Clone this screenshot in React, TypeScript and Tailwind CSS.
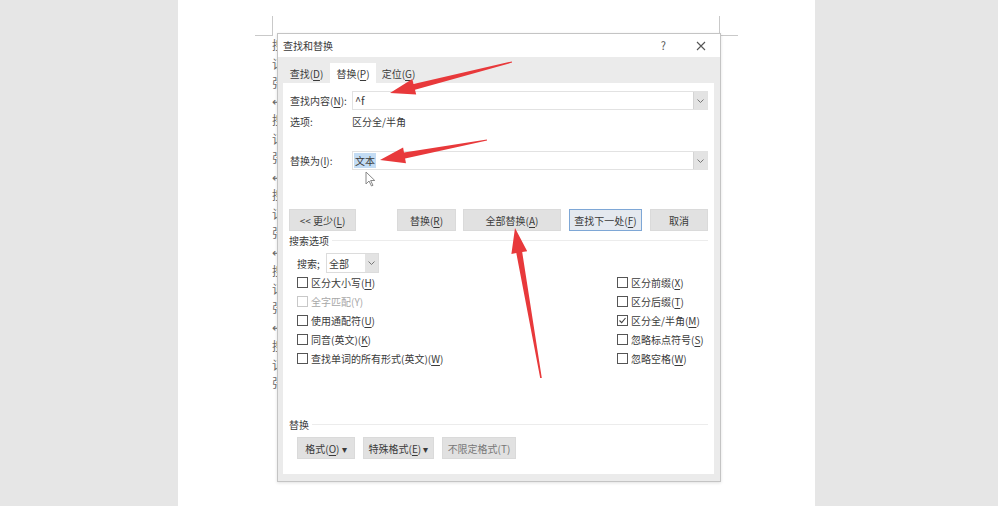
import React from "react";

const font = { fontFamily: '"Noto Sans CJK SC", "Noto Sans", sans-serif' };

const docLines = Array.from({ length: 19 }, (_, i) => ["搜", "记", "张", "↵"][i % 4]);

// mnemonic label: text before, underlined key, text after
const Mn = ({ t, k, a = ")" }: { t: string; k: string; a?: string }) => (
  <span className="whitespace-nowrap">
    {t}
    <span className="underline underline-offset-2">{k}</span>
    {a}
  </span>
);

const Chevron = () => (
  <svg width="9" height="6" viewBox="0 0 9 6">
    <path d="M1.5 1.5 L4.5 4.5 L7.5 1.5" fill="none" stroke="#777" strokeWidth="1" />
  </svg>
);

const Check = ({ on, off }: { on?: boolean; off?: boolean }) => (
  <span
    className={`shrink-0 w-[11px] h-[11px] border flex items-center justify-center bg-white ${
      off ? "border-[#c8c8c8]" : "border-[#555]"
    }`}
  >
    {on && (
      <svg width="9" height="9" viewBox="0 0 9 9">
        <path d="M1.5 4.5 L3.7 6.7 L7.5 2" fill="none" stroke="#444" strokeWidth="1.1" />
      </svg>
    )}
  </span>
);

const CheckRow = ({ children, on, off }: { children: React.ReactNode; on?: boolean; off?: boolean }) => (
  <div className={`h-[19px] flex items-center gap-[3px] whitespace-nowrap ${off ? "text-[#a8a8a8]" : "text-[#3a3a3a]"}`}>
    <Check on={on} off={off} />
    {children}
  </div>
);

const Btn = ({ w, children, cls = "" }: { w: string; children: React.ReactNode; cls?: string }) => (
  <div className={`${w} shrink-0 h-[22px] flex items-center justify-center whitespace-nowrap bg-[#e1e1e1] border border-[#dadada] ${cls}`}>
    {children}
  </div>
);

function arrow(tx: number, ty: number, sx: number, sy: number, hl = 25, hw = 8, sw = 3, tw = 0.6) {
  const dx = sx - tx;
  const dy = sy - ty;
  const len = Math.hypot(dx, dy);
  const ux = dx / len;
  const uy = dy / len;
  const nx = -uy;
  const ny = ux;
  const bx = tx + ux * hl;
  const by = ty + uy * hl;
  const p = (x: number, y: number) => `${x.toFixed(1)},${y.toFixed(1)}`;
  return [
    p(tx, ty),
    p(bx + nx * hw, by + ny * hw),
    p(bx + nx * sw, by + ny * sw),
    p(sx + nx * tw, sy + ny * tw),
    p(sx - nx * tw, sy - ny * tw),
    p(bx - nx * sw, by - ny * sw),
    p(bx - nx * hw, by - ny * hw),
  ].join(" ");
}

export default function App() {
  return (
    <div className="relative w-[998px] h-[506px] bg-[#e6e6e6] overflow-hidden text-[10px]" style={font}>
      {/* document page */}
      <div className="ml-[178px] w-[637px] h-[506px] bg-white pt-[16px]">
        <div className="flex">
          <div className="ml-[77px] w-[18px] h-[20px] border-r border-b border-[#c9c9c9]" />
          <div className="ml-[446px] w-[19px] h-[20px] border-l border-b border-[#c9c9c9]" />
        </div>
        <div className="ml-[94px] flex flex-col text-[12px] leading-[18.8px] text-[#666]">
          {docLines.map((c, i) => (
            <span key={i}>{c}</span>
          ))}
        </div>
      </div>

      {/* dialog */}
      <div className="absolute left-[277px] top-[33px] w-[444px] h-[449px] border border-[#c4c4c4] bg-[#ebebeb] flex flex-col text-[#3a3a3a] shadow-[0_1px_3px_rgba(0,0,0,0.12)]">
        <div className="h-[23px] bg-white flex items-center pl-[5px] pr-[14px]">
          <span>查找和替换</span>
          <span className="ml-auto mr-[30px] text-[#555] text-[11px]">?</span>
          <svg width="10" height="10" viewBox="0 0 10 10">
            <path d="M1 1 L9 9 M9 1 L1 9" stroke="#555" strokeWidth="1.1" />
          </svg>
        </div>
        <div className="flex-1 flex flex-col pl-[5px] pr-[6px] pb-[7px]">
          {/* tabs */}
          <div className="h-[26px] flex items-end">
            <div className="w-[47px] h-[20px] flex items-center justify-center">
              <Mn t="查找(" k="D" />
            </div>
            <div className="w-[46px] h-[20px] bg-white flex items-center justify-center">
              <Mn t="替换(" k="P" />
            </div>
            <div className="w-[45px] h-[20px] flex items-center justify-center">
              <Mn t="定位(" k="G" />
            </div>
          </div>
          {/* panel */}
          <div className="flex-1 bg-white flex flex-col pl-[6px] pr-[6px]">
            <div className="mt-[8px] flex items-center h-[19px]">
              <span className="w-[63px] shrink-0 pl-[1px]">
                <Mn t="查找内容(" k="N" a="):" />
              </span>
              <div className="flex-1 h-[19px] border border-[#e2e2e2] flex items-center">
                <span className="pl-[2px] flex-1 text-[11px]">^f</span>
                <div className="w-[14px] h-[17px] bg-[#e3e3e3] border-l border-[#d4d4d4] flex items-center justify-center">
                  <Chevron />
                </div>
              </div>
            </div>
            <div className="h-[18px] mt-[2px] flex items-center">
              <span className="w-[63px] shrink-0 pl-[1px]">选项:</span>
              <span>区分全/半角</span>
            </div>
            <div className="mt-[21px] flex items-center h-[19px]">
              <span className="w-[63px] shrink-0 pl-[1px]">
                <Mn t="替换为(" k="I" a="):" />
              </span>
              <div className="flex-1 h-[19px] border border-[#e2e2e2] flex items-center">
                <span className="ml-[1px] bg-[#c3dcf4] px-[1px] leading-[15px]">文本</span>
                <span className="flex-1" />
                <div className="w-[14px] h-[17px] bg-[#e3e3e3] border-l border-[#d4d4d4] flex items-center justify-center">
                  <Chevron />
                </div>
              </div>
            </div>
            {/* mouse pointer */}
            <div className="h-[0px] pl-[76px]">
              <svg width="12" height="16" viewBox="0 0 12 16" className="mt-[1px]">
                <path d="M1 1 L1 13 L4 10 L6.5 15 L8 14.3 L5.6 9.5 L9.8 9.5 Z" fill="white" stroke="#888" strokeWidth="1" />
              </svg>
            </div>
            {/* main buttons */}
            <div className="mt-[39px] flex">
              <Btn w="w-[67px]">
                <span className="whitespace-nowrap">
                  {"<< "}
                  <Mn t="更少(" k="L" />
                </span>
              </Btn>
              <Btn w="w-[59px]" cls="ml-[41px]">
                <Mn t="替换(" k="R" />
              </Btn>
              <Btn w="w-[98px]" cls="ml-[7px]">
                <Mn t="全部替换(" k="A" />
              </Btn>
              <Btn w="w-[73px]" cls="ml-[8px] !bg-[#e4e9ef] !border-[#7ea7d6]">
                <Mn t="查找下一处(" k="F" />
              </Btn>
              <Btn w="w-[58px]" cls="ml-[8px]">
                取消
              </Btn>
            </div>
            {/* search options */}
            <div className="mt-[2px] h-[14px] flex items-center gap-[3px]">
              <span>搜索选项</span>
              <div className="flex-1 h-px bg-[#ececec]" />
            </div>
            <div className="mt-[6px] pl-[8px] flex items-center h-[20px]">
              <span className="w-[29px] shrink-0">搜索;</span>
              <div className="w-[53px] h-[20px] border border-[#dcdcdc] flex items-center">
                <span className="pl-[2px] flex-1">全部</span>
                <div className="w-[13px] h-[18px] bg-[#e3e3e3] flex items-center justify-center">
                  <Chevron />
                </div>
              </div>
            </div>
            <div className="pl-[8px] flex">
              <div className="w-[320px] shrink-0 flex flex-col">
                <CheckRow>
                  <Mn t="区分大小写(" k="H" />
                </CheckRow>
                <CheckRow off>全字匹配(Y)</CheckRow>
                <CheckRow>
                  <Mn t="使用通配符(" k="U" />
                </CheckRow>
                <CheckRow>
                  <Mn t="同音(英文)(" k="K" />
                </CheckRow>
                <CheckRow>
                  <Mn t="查找单词的所有形式(英文)(" k="W" />
                </CheckRow>
              </div>
              <div className="flex flex-col">
                <CheckRow>
                  <Mn t="区分前缀(" k="X" />
                </CheckRow>
                <CheckRow>
                  <Mn t="区分后缀(" k="T" />
                </CheckRow>
                <CheckRow on>
                  <Mn t="区分全/半角(" k="M" />
                </CheckRow>
                <CheckRow>
                  <Mn t="忽略标点符号(" k="S" />
                </CheckRow>
                <CheckRow>
                  <Mn t="忽略空格(" k="W" />
                </CheckRow>
              </div>
            </div>
            {/* replace section */}
            <div className="mt-[49px] h-[14px] flex items-center gap-[3px]">
              <span>替换</span>
              <div className="flex-1 h-px bg-[#ececec]" />
            </div>
            <div className="mt-[6px] pl-[8px] flex gap-[8px]">
              <Btn w="w-[58px]">
                <Mn t="格式(" k="O" a=") ▾" />
              </Btn>
              <Btn w="w-[71px]">
                <Mn t="特殊格式(" k="E" a=") ▾" />
              </Btn>
              <Btn w="w-[74px]" cls="text-[#777]">
                不限定格式(T)
              </Btn>
            </div>
          </div>
        </div>
      </div>

      {/* red annotation arrows */}
      <svg className="absolute inset-0 pointer-events-none" width="998" height="506" viewBox="0 0 998 506">
        <polygon points={arrow(390, 93, 512, 62)} fill="#e8393b" />
        <polygon points={arrow(380, 160, 487, 140)} fill="#e8393b" />
        <polygon points={arrow(515, 228, 541, 378, 25, 8, 3, 0.8)} fill="#e8393b" />
      </svg>
    </div>
  );
}
